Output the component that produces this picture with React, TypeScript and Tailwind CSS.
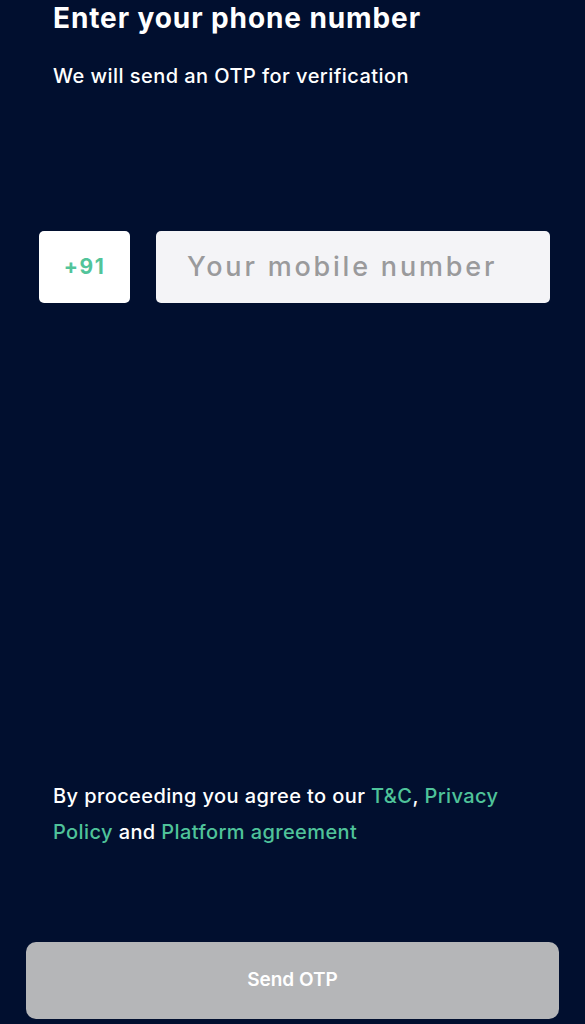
import React from "react";

export default function App() {
  return (
    <div
      className="h-[1024px] w-full overflow-hidden bg-[#010f2f] flex flex-col"
      style={{ fontFamily: "Inter, 'Noto Sans', sans-serif" }}
    >
      <div className="px-[53px]">
        <h1 className="mt-[1px] text-[28px] leading-[34px] font-bold text-white tracking-[0.9px]">
          Enter your phone number
        </h1>
        <p className="mt-[28px] text-[20px] leading-[26px] font-medium text-white tracking-[0.45px]">
          We will send an OTP for verification
        </p>
      </div>

      <div className="mt-[142px] flex gap-[26px] pl-[39px] pr-[35px]">
        <div className="w-[91px] h-[72px] shrink-0 rounded-[5px] bg-white flex items-center justify-center">
          <span className="text-[21px] font-bold text-[#52c49a] tracking-[1.5px]">+91</span>
        </div>
        <div className="flex-1 h-[72px] rounded-[5px] bg-[#f4f4f7] flex items-center pl-[31px]">
          <input
            className="w-full bg-transparent outline-none text-[27px] font-medium tracking-[2.8px] text-[#333] placeholder:text-[#9a9a9c]"
            placeholder="Your mobile number"
          />
        </div>
      </div>

      <div className="flex-1" />

      <p className="px-[53px] text-[20px] leading-[36px] font-medium text-white tracking-[0.4px]">
        By proceeding you agree to our <span className="text-[#4fc39a]">T&amp;C</span>,{" "}
        <span className="text-[#4fc39a]">Privacy Policy</span> and{" "}
        <span className="text-[#4fc39a]">Platform agreement</span>
      </p>

      <div className="mt-[92px] mb-[5px] px-[26px]">
        <button className="w-full h-[77px] rounded-[10px] bg-[#b5b6b8] text-white text-[19px] font-semibold">
          Send OTP
        </button>
      </div>
    </div>
  );
}
